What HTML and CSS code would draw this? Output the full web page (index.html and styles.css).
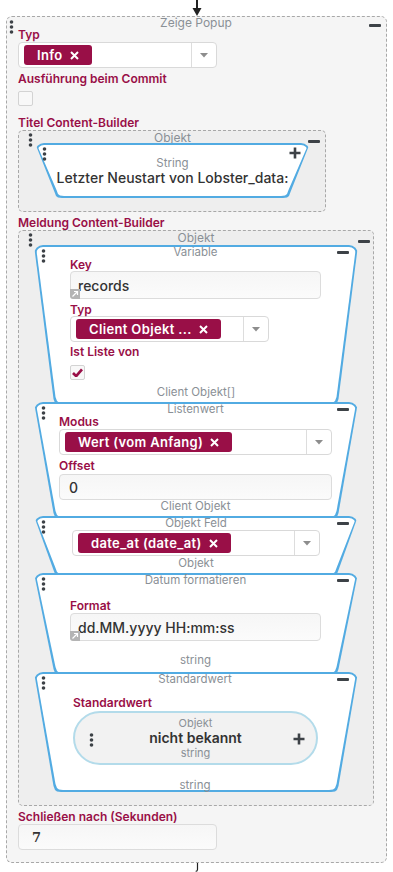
FILE: index.html
```html
<!DOCTYPE html>
<html lang="de">
<head>
<meta charset="utf-8">
<title>Zeige Popup</title>
<link rel="stylesheet" href="styles.css">
</head>
<body>
<svg class="arrow-in" viewBox="0 0 12 16" width="12" height="16"><path d="M6 0v9" stroke="#222" stroke-width="2"/><path d="M1.5 8h9L6 16z" fill="#222"/></svg>

<div class="popup">
  <svg class="dots dots-popup" viewBox="0 0 5 14" width="5" height="14"><circle cx="2.5" cy="2" r="1.8"/><circle cx="2.5" cy="7" r="1.8"/><circle cx="2.5" cy="12" r="1.8"/></svg>
  <span class="minus minus-popup"></span>
  <div class="popup-title">Zeige Popup</div>

  <div class="lbl">Typ</div>
  <div class="select sel-narrow mt1">
    <div class="sel-value"><span class="chip">Info <svg class="x" viewBox="0 0 9 9" width="9" height="9"><path d="M1 1l7 7M8 1L1 8"/></svg></span></div>
    <div class="sel-toggle"><svg viewBox="0 0 8 5" width="8" height="5"><path d="M0 0h8L4 4.5z"/></svg></div>
  </div>

  <div class="lbl mt5">Ausführung beim Commit</div>
  <div class="checkbox mt6"></div>

  <div class="lbl mt11">Titel Content-Builder</div>
  <div class="obj obj-title mt1">
    <svg class="dots dots-obj" viewBox="0 0 5 14" width="5" height="14"><circle cx="2.5" cy="2" r="1.8"/><circle cx="2.5" cy="7" r="1.8"/><circle cx="2.5" cy="12" r="1.8"/></svg>
    <span class="minus minus-obj1"></span>
    <div class="obj-head short">Objekt</div>
    <div class="card card-string">
      <svg class="dots dots-card" viewBox="0 0 5 14" width="5" height="14"><circle cx="2.5" cy="2" r="1.8"/><circle cx="2.5" cy="7" r="1.8"/><circle cx="2.5" cy="12" r="1.8"/></svg>
      <svg class="plus plus-card" viewBox="0 0 12 12" width="12" height="12"><path d="M6 0.5v11M0.5 6h11"/></svg>
      <div class="type-top">String</div>
      <div class="value">Letzter Neustart von Lobster_data:</div>
    </div>
  </div>

  <div class="lbl mt5">Meldung Content-Builder</div>
  <div class="obj obj-msg mt1">
    <svg class="dots dots-obj" viewBox="0 0 5 14" width="5" height="14"><circle cx="2.5" cy="2" r="1.8"/><circle cx="2.5" cy="7" r="1.8"/><circle cx="2.5" cy="12" r="1.8"/></svg>
    <span class="minus minus-obj2"></span>
    <div class="obj-head">Objekt</div>

    <div class="card card-var">
      <svg class="dots dots-card" viewBox="0 0 5 14" width="5" height="14"><circle cx="2.5" cy="2" r="1.8"/><circle cx="2.5" cy="7" r="1.8"/><circle cx="2.5" cy="12" r="1.8"/></svg>
      <span class="minus minus-card"></span>
      <div class="card-head">Variable</div>
      <div class="lbl">Key</div>
      <div class="textarea">records<svg class="grip" viewBox="0 0 10 10" width="10" height="10"><rect width="10" height="10" fill="#b4b4b4"/><path d="M2.5 7.5l5-5M4 2.5h3.5V6" stroke="#fff" stroke-width="1.2" fill="none"/></svg></div>
      <div class="lbl mt5">Typ</div>
      <div class="select sel-narrow">
        <div class="sel-value"><span class="chip">Client Objekt ... <svg class="x" viewBox="0 0 9 9" width="9" height="9"><path d="M1 1l7 7M8 1L1 8"/></svg></span></div>
        <div class="sel-toggle"><svg viewBox="0 0 8 5" width="8" height="5"><path d="M0 0h8L4 4.5z"/></svg></div>
      </div>
      <div class="lbl mt4">Ist Liste von</div>
      <div class="checkbox checked mt7"><svg viewBox="0 0 12 10" width="11" height="9"><path d="M1 5.5l3.5 3.5L11 1.5" stroke="#990f47" stroke-width="3" fill="none"/></svg></div>
      <div class="type mt6">Client Objekt[]</div>
    </div>

    <div class="card card-list">
      <svg class="dots dots-card" viewBox="0 0 5 14" width="5" height="14"><circle cx="2.5" cy="2" r="1.8"/><circle cx="2.5" cy="7" r="1.8"/><circle cx="2.5" cy="12" r="1.8"/></svg>
      <span class="minus minus-card"></span>
      <div class="card-head">Listenwert</div>
      <div class="lbl">Modus</div>
      <div class="select mt1">
        <div class="sel-value"><span class="chip">Wert (vom Anfang) <svg class="x" viewBox="0 0 9 9" width="9" height="9"><path d="M1 1l7 7M8 1L1 8"/></svg></span></div>
        <div class="sel-toggle"><svg viewBox="0 0 8 5" width="8" height="5"><path d="M0 0h8L4 4.5z"/></svg></div>
      </div>
      <div class="lbl mt5">Offset</div>
      <div class="input mt2">0</div>
      <div class="type">Client Objekt</div>
    </div>

    <div class="card card-field">
      <svg class="dots dots-card" viewBox="0 0 5 14" width="5" height="14"><circle cx="2.5" cy="2" r="1.8"/><circle cx="2.5" cy="7" r="1.8"/><circle cx="2.5" cy="12" r="1.8"/></svg>
      <span class="minus minus-card"></span>
      <div class="card-head">Objekt Feld</div>
      <div class="select">
        <div class="sel-value"><span class="chip">date_at (date_at) <svg class="x" viewBox="0 0 9 9" width="9" height="9"><path d="M1 1l7 7M8 1L1 8"/></svg></span></div>
        <div class="sel-toggle"><svg viewBox="0 0 8 5" width="8" height="5"><path d="M0 0h8L4 4.5z"/></svg></div>
      </div>
      <div class="type mt1">Objekt</div>
    </div>

    <div class="card card-date">
      <svg class="dots dots-card" viewBox="0 0 5 14" width="5" height="14"><circle cx="2.5" cy="2" r="1.8"/><circle cx="2.5" cy="7" r="1.8"/><circle cx="2.5" cy="12" r="1.8"/></svg>
      <span class="minus minus-card"></span>
      <div class="card-head">Datum formatieren</div>
      <div class="lbl mt13">Format</div>
      <div class="textarea mt1">dd.MM.yyyy HH:mm:ss<svg class="grip" viewBox="0 0 10 10" width="10" height="10"><rect width="10" height="10" fill="#b4b4b4"/><path d="M2.5 7.5l5-5M4 2.5h3.5V6" stroke="#fff" stroke-width="1.2" fill="none"/></svg></div>
      <div class="type mt13">string</div>
    </div>

    <div class="card card-default">
      <svg class="dots dots-card" viewBox="0 0 5 14" width="5" height="14"><circle cx="2.5" cy="2" r="1.8"/><circle cx="2.5" cy="7" r="1.8"/><circle cx="2.5" cy="12" r="1.8"/></svg>
      <span class="minus minus-card"></span>
      <div class="card-head">Standardwert</div>
      <div class="lbl mt11">Standardwert</div>
      <div class="pill mt2">
        <svg class="dots dots-pill" viewBox="0 0 5 14" width="5" height="14"><circle cx="2.5" cy="2" r="1.8"/><circle cx="2.5" cy="7" r="1.8"/><circle cx="2.5" cy="12" r="1.8"/></svg>
        <svg class="plus plus-pill" viewBox="0 0 12 12" width="12" height="12"><path d="M6 0.5v11M0.5 6h11"/></svg>
        <div class="pill-type">Objekt</div>
        <div class="pill-value">nicht bekannt</div>
        <div class="pill-type">string</div>
      </div>
      <div class="type mt14">string</div>
    </div>
  </div>

  <div class="lbl mt5">Schließen nach (Sekunden)</div>
  <div class="input input-num sel-narrow mt1">7</div>
</div>

<svg class="arrow-out" viewBox="0 0 12 9" width="12" height="9"><path d="M6.5 0v6.5q0 1.8-1.8 1.8" stroke="#222" stroke-width="1.2" fill="none"/></svg>
</body>
</html>
```

FILE: styles.css
```css
* { box-sizing: border-box; }

body {
  margin: 0;
  background: #fff;
  font-family: Inter, "Noto Sans", sans-serif;
  color: #333;
}

.arrow-in, .arrow-out {
  display: block;
  margin: 0 auto;
}

.popup {
  position: relative;
  margin: 0 6px;
  border: 1px dashed #a8a8a8;
  border-radius: 6px;
  background: #f5f5f5;
  padding: 0 12px 12px 11px;
}

.popup-title {
  height: 12px;
  line-height: 12px;
  font-size: 12px;
  color: #8a9096;
  text-align: center;
}

/* icons */
.dots { position: absolute; fill: #3d4247; }
.dots-popup { left: 2px; top: 3px; }
.dots-obj { left: 9px; top: 2px; }
.dots-card { left: 7px; top: 4px; }
.dots-pill { left: 14px; top: 20px; }

.minus {
  position: absolute;
  width: 12px;
  height: 3px;
  border-radius: 1px;
  background: #3d4247;
}
.minus-popup { right: 5px; top: 7px; }
.minus-obj1 { right: 5px; top: 9px; }
.minus-obj2 { right: 3px; top: 9px; }
.minus-card { right: 9px; top: 6px; }

.plus { position: absolute; stroke: #3d4247; stroke-width: 2.6; fill: none; }
.plus-card { right: 9px; top: 4px; }
.plus-pill { right: 11px; top: 20px; }

/* labels & spacing */
.lbl {
  font-size: 12px;
  line-height: 12px;
  font-weight: 600;
  color: #990f47;
  white-space: nowrap;
}
.mt1 { margin-top: 1px; }
.mt2 { margin-top: 2px; }
.mt4 { margin-top: 4px; }
.mt5 { margin-top: 5px; }
.mt6 { margin-top: 6px; }
.mt7 { margin-top: 7px; }
.mt11 { margin-top: 11px; }
.mt13 { margin-top: 13px; }
.mt14 { margin-top: 14px; }

/* select */
.select {
  display: flex;
  height: 26px;
  border: 1px solid #d9d9d9;
  border-radius: 4px;
  background: #fff;
}
.sel-narrow { width: 199px; }
.sel-value {
  flex: 1;
  display: flex;
  align-items: center;
  padding-left: 5px;
}
.sel-toggle {
  width: 25px;
  border-left: 1px solid #ddd;
  display: flex;
  align-items: center;
  justify-content: center;
  fill: #8d8d8d;
}
.chip {
  display: inline-flex;
  align-items: center;
  gap: 7px;
  height: 20px;
  padding: 0 13px 0 13px;
  border-radius: 3px;
  background: #990f47;
  color: #fff;
  font-size: 13px;
  font-weight: 600;
  letter-spacing: 0.35px;
  white-space: nowrap;
}
.chip .x { stroke: #fff; stroke-width: 2; fill: none; }

/* checkbox */
.checkbox {
  width: 15px;
  height: 15px;
  border: 1px solid #d3d3d3;
  border-radius: 2px;
  background: #f8f8f8;
  display: flex;
  align-items: center;
  justify-content: center;
}

/* inputs */
.textarea, .input {
  position: relative;
  display: flex;
  align-items: center;
  border: 1px solid #dcdcdc;
  border-radius: 4px;
  background: linear-gradient(#f6f6f6, #fbfbfb);
  font-size: 14px;
  font-weight: 500;
  color: #333;
}
.textarea { height: 28px; padding-left: 7px; }
.input { height: 26px; padding-left: 9px; }
.input-num {
  padding-left: 13px;
  font-family: "DejaVu Serif", serif;
  font-weight: 700;
  font-size: 13px;
}
.grip { position: absolute; left: -1px; bottom: -1px; border-bottom-left-radius: 3px; }

/* Objekt containers */
.obj {
  position: relative;
  border: 1px dashed #a8a8a8;
  border-radius: 5px;
  background: #eeeeee;
}
.obj-title { width: 308px; padding: 0 15px 13px 16px; }
.obj-msg { padding: 0 15px 13px 15px; }
.obj-head {
  height: 14px;
  line-height: 14px;
  font-size: 12px;
  color: #8a9096;
  text-align: center;
}
.obj-head.short { height: 12px; line-height: 14px; }

/* trapezoid cards */
.card {
  position: relative;
  z-index: 0;
}
.card + .card { margin-top: -3px; }
.card::before,
.card::after {
  content: "";
  position: absolute;
  z-index: -1;
  clip-path: polygon(0 0, 100% 0, calc(100% - 19.5px) calc(100% - 6px), calc(100% - 21px) calc(100% - 2px), calc(100% - 23px) calc(100% - 0.4px), calc(100% - 27px) 100%, 27px 100%, 23px calc(100% - 0.4px), 21px calc(100% - 2px), 19.5px calc(100% - 6px));
}
.card::before {
  inset: 0;
  background: #52abe2;
  border-radius: 9px;
}
.card::after {
  inset: 2px;
  background: #fff;
  border-radius: 7px;
}
.card-head {
  height: 14px;
  line-height: 14px;
  font-size: 11.5px;
  color: #8a9096;
  text-align: center;
}
.type {
  height: 12px;
  line-height: 12px;
  font-size: 11.5px;
  color: #8a9096;
  text-align: center;
}
.card-string { padding: 14px 0 12px; text-align: center; }
.type-top {
  line-height: 12px;
  font-size: 11.5px;
  color: #8a9096;
}
.value {
  margin-top: 1px;
  line-height: 16px;
  font-size: 14px;
  font-weight: 500;
  color: #333;
}
.card-var { padding: 0 37px 7px 36px; }
.card-var .type { margin-right: -1px; }
.card-list { padding: 0 26px 7px 25px; }
.card-field { padding: 0 38px 7px 38px; }
.card-date { padding: 0 37px 9px 36px; }
.card-default { padding: 0 40px 1px 38px; }
.card-default .lbl { padding-left: 1px; }

/* pill */
.pill {
  position: relative;
  margin-left: 1px;
  height: 54px;
  border: 2px solid #b3dbea;
  border-radius: 27px;
  background: #f2f2f2;
  display: flex;
  flex-direction: column;
  align-items: center;
  justify-content: center;
}
.pill-type {
  line-height: 14.5px;
  font-size: 11px;
  color: #8a9096;
}
.pill-value {
  line-height: 16px;
  font-size: 14px;
  font-weight: 600;
  color: #333;
}
```
